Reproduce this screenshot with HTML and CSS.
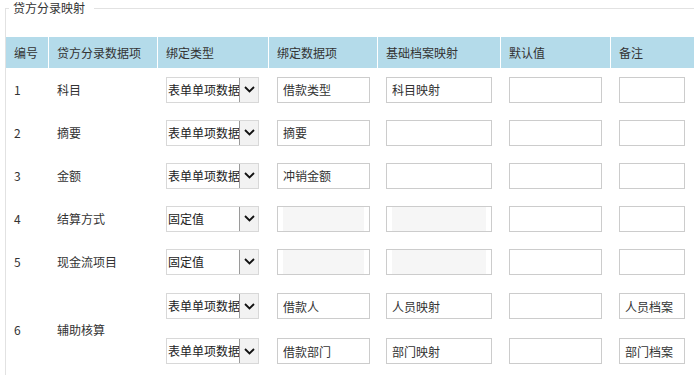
FILE: index.html
```html
<!DOCTYPE html>
<html lang="zh-CN">
<head>
  <meta charset="UTF-8">
  <title>贷方分录映射</title>
  <link rel="stylesheet" href="styles.css">
</head>
<body>

<fieldset class="mapping">
  <legend>贷方分录映射</legend>
  <table class="grid">
    <colgroup>
      <col class="c-no"><col class="c-item"><col class="c-type"><col class="c-data">
      <col class="c-map"><col class="c-def"><col class="c-note">
    </colgroup>
    <thead>
      <tr>
        <th>编号</th><th>贷方分录数据项</th><th>绑定类型</th><th>绑定数据项</th>
        <th>基础档案映射</th><th>默认值</th><th>备注</th>
      </tr>
    </thead>
    <tbody>
      <tr>
        <td>1</td><td>科目</td>
        <td><div class="select"><span class="select-text">表单单项数据</span><span class="select-arrow"><svg width="11" height="7" viewBox="0 0 11 7"><path d="M1 1l4.5 4.5L10 1" fill="none" stroke="#111" stroke-width="1.8"/></svg></span></div></td>
        <td><input class="field w-data" type="text" value="借款类型"></td>
        <td><input class="field w-map" type="text" value="科目映射"></td>
        <td><input class="field w-def" type="text" value=""></td>
        <td><input class="field w-note" type="text" value=""></td>
      </tr>
      <tr>
        <td>2</td><td>摘要</td>
        <td><div class="select"><span class="select-text">表单单项数据</span><span class="select-arrow"><svg width="11" height="7" viewBox="0 0 11 7"><path d="M1 1l4.5 4.5L10 1" fill="none" stroke="#111" stroke-width="1.8"/></svg></span></div></td>
        <td><input class="field w-data" type="text" value="摘要"></td>
        <td><input class="field w-map" type="text" value=""></td>
        <td><input class="field w-def" type="text" value=""></td>
        <td><input class="field w-note" type="text" value=""></td>
      </tr>
      <tr>
        <td>3</td><td>金额</td>
        <td><div class="select"><span class="select-text">表单单项数据</span><span class="select-arrow"><svg width="11" height="7" viewBox="0 0 11 7"><path d="M1 1l4.5 4.5L10 1" fill="none" stroke="#111" stroke-width="1.8"/></svg></span></div></td>
        <td><input class="field w-data" type="text" value="冲销金额"></td>
        <td><input class="field w-map" type="text" value=""></td>
        <td><input class="field w-def" type="text" value=""></td>
        <td><input class="field w-note" type="text" value=""></td>
      </tr>
      <tr>
        <td>4</td><td>结算方式</td>
        <td><div class="select"><span class="select-text">固定值</span><span class="select-arrow"><svg width="11" height="7" viewBox="0 0 11 7"><path d="M1 1l4.5 4.5L10 1" fill="none" stroke="#111" stroke-width="1.8"/></svg></span></div></td>
        <td><div class="field readonly w-data"><div class="fill"></div></div></td>
        <td><div class="field readonly w-map"><div class="fill"></div></div></td>
        <td><input class="field w-def" type="text" value=""></td>
        <td><input class="field w-note" type="text" value=""></td>
      </tr>
      <tr>
        <td>5</td><td>现金流项目</td>
        <td><div class="select"><span class="select-text">固定值</span><span class="select-arrow"><svg width="11" height="7" viewBox="0 0 11 7"><path d="M1 1l4.5 4.5L10 1" fill="none" stroke="#111" stroke-width="1.8"/></svg></span></div></td>
        <td><div class="field readonly w-data"><div class="fill"></div></div></td>
        <td><div class="field readonly w-map"><div class="fill"></div></div></td>
        <td><input class="field w-def" type="text" value=""></td>
        <td><input class="field w-note" type="text" value=""></td>
      </tr>
      <tr class="sub first">
        <td rowspan="2">6</td><td rowspan="2">辅助核算</td>
        <td><div class="select"><span class="select-text">表单单项数据</span><span class="select-arrow"><svg width="11" height="7" viewBox="0 0 11 7"><path d="M1 1l4.5 4.5L10 1" fill="none" stroke="#111" stroke-width="1.8"/></svg></span></div></td>
        <td><input class="field w-data" type="text" value="借款人"></td>
        <td><input class="field w-map" type="text" value="人员映射"></td>
        <td><input class="field w-def" type="text" value=""></td>
        <td><input class="field w-note" type="text" value="人员档案"></td>
      </tr>
      <tr class="sub">
        <td><div class="select"><span class="select-text">表单单项数据</span><span class="select-arrow"><svg width="11" height="7" viewBox="0 0 11 7"><path d="M1 1l4.5 4.5L10 1" fill="none" stroke="#111" stroke-width="1.8"/></svg></span></div></td>
        <td><input class="field w-data" type="text" value="借款部门"></td>
        <td><input class="field w-map" type="text" value="部门映射"></td>
        <td><input class="field w-def" type="text" value=""></td>
        <td><input class="field w-note" type="text" value="部门档案"></td>
      </tr>
    </tbody>
  </table>
</fieldset>

</body>
</html>
```

FILE: styles.css
```css
* {
  box-sizing: border-box;
}
html, body {
  overflow: hidden;
}
body {
  margin: 0;
  padding: 0;
  background-color: #fff;
  font-family: "Noto Sans CJK SC", "Noto Sans", sans-serif;
  font-size: 12px;
  color: #333;
}

/* fieldset frame */
.mapping {
  margin: 0 0 0 5px;
  padding: 0 0 20px 0;
  border: 1px solid #e2e2e2;
  border-right: none;
  width: 720px;
}
.mapping legend {
  margin-left: 3px;
  padding: 0 9px 0 4px;
  font-size: 12px;
  line-height: 16px;
  color: #333;
}

/* table */
.grid {
  margin-top: 21px;
  border-collapse: separate;
  border-spacing: 0;
  table-layout: fixed;
  width: 695px;
}
.c-no { width: 43px; }
.c-item { width: 109px; }
.c-type { width: 111px; }
.c-data { width: 109px; }
.c-map { width: 123px; }
.c-def { width: 110px; }
.c-note { width: 90px; }

.grid th {
  height: 31px;
  padding: 0 0 0 8px;
  background-color: #b4dbea;
  border-right: 1px solid #fff;
  font-weight: normal;
  text-align: left;
  line-height: 16px;
  color: #333;
}
.grid td {
  height: 43px;
  padding: 0 0 0 8px;
  vertical-align: middle;
  line-height: 16px;
  white-space: nowrap;
}
.grid tr.sub.first td {
  height: 46px;
}
.grid tr.sub td {
  height: 44px;
}
.grid td[rowspan] {
  padding-top: 4px;
}

/* inputs */
.field {
  display: block;
  height: 26px;
  margin: 0;
  padding: 0 5px;
  border: 1px solid #ccc;
  background: #fff;
  font-family: inherit;
  font-size: 12px;
  color: #333;
  outline: none;
}
.w-data { width: 93px; }
.w-map { width: 106px; }
.w-def { width: 93px; }
.w-note { width: 66px; }

.readonly {
  display: flex;
}
.readonly .fill {
  flex: 1;
  background-color: #f6f6f6;
}

/* dropdown */
.select {
  display: flex;
  width: 93px;
  height: 26px;
  border: 1px solid #d8d8d8;
  background: #fff;
  overflow: hidden;
}
.select-text {
  flex: 1;
  overflow: hidden;
  padding-left: 1px;
  line-height: 24px;
  font-size: 12px;
  color: #222;
  white-space: nowrap;
}
.select-arrow {
  display: flex;
  flex-shrink: 0;
  align-items: center;
  justify-content: center;
  width: 20px;
  margin: -1px -1px -1px 0;
  border: 1px solid #9a9a9a;
  background: #f2f2f2;
}
```
